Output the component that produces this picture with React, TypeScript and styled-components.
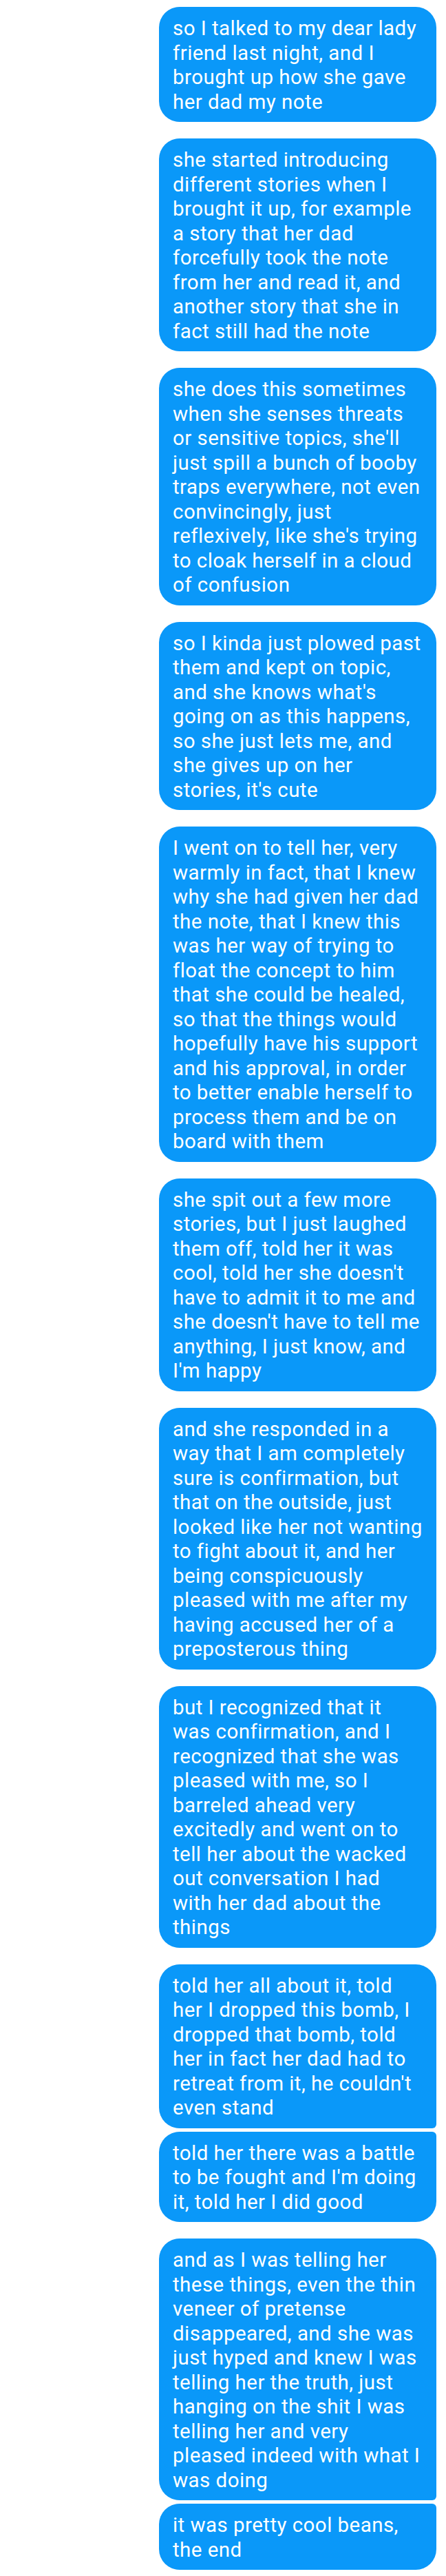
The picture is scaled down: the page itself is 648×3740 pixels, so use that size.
import React from "react";
import styled, { createGlobalStyle } from "styled-components";

const GlobalStyle = createGlobalStyle`
  html, body {
    margin: 0;
    padding: 0;
    background: #ffffff;
  }
  body {
    font-family: Roboto, "Noto Sans", "Liberation Sans", sans-serif;
  }
`;

const Thread = styled.div`
  display: flex;
  flex-direction: column;
  align-items: flex-end;
  gap: 24px;
  padding: 10px 14px 10px 0;
  width: 648px;
  box-sizing: border-box;
`;

const Group = styled.div`
  display: flex;
  flex-direction: column;
  gap: 5px;
`;

type Pos = "single" | "first" | "middle" | "last";

const Bubble = styled.div<{ $pos: Pos }>`
  width: 403px;
  box-sizing: border-box;
  background: #0a98f9;
  color: #ffffff;
  font-size: 29.5px;
  letter-spacing: 0.45px;
  line-height: 35.5px;
  padding: 14px 8px 11px 20px;
  white-space: nowrap;
  overflow: hidden;
  border-radius: ${({ $pos }) =>
    $pos === "first"
      ? "30px 30px 6px 30px"
      : $pos === "last"
      ? "30px 6px 30px 30px"
      : $pos === "middle"
      ? "30px 6px 6px 30px"
      : "30px"};
`;

const groups: string[][][] = [
  [["so I talked to my dear lady", "friend last night, and I", "brought up how she gave", "her dad my note"]],
  [[
    "she started introducing",
    "different stories when I",
    "brought it up, for example",
    "a story that her dad",
    "forcefully took the note",
    "from her and read it, and",
    "another story that she in",
    "fact still had the note",
  ]],
  [[
    "she does this sometimes",
    "when she senses threats",
    "or sensitive topics, she'll",
    "just spill a bunch of booby",
    "traps everywhere, not even",
    "convincingly, just",
    "reflexively, like she's trying",
    "to cloak herself in a cloud",
    "of confusion",
  ]],
  [[
    "so I kinda just plowed past",
    "them and kept on topic,",
    "and she knows what's",
    "going on as this happens,",
    "so she just lets me, and",
    "she gives up on her",
    "stories, it's cute",
  ]],
  [[
    "I went on to tell her, very",
    "warmly in fact, that I knew",
    "why she had given her dad",
    "the note, that I knew this",
    "was her way of trying to",
    "float the concept to him",
    "that she could be healed,",
    "so that the things would",
    "hopefully have his support",
    "and his approval, in order",
    "to better enable herself to",
    "process them and be on",
    "board with them",
  ]],
  [[
    "she spit out a few more",
    "stories, but I just laughed",
    "them off, told her it was",
    "cool, told her she doesn't",
    "have to admit it to me and",
    "she doesn't have to tell me",
    "anything, I just know, and",
    "I'm happy",
  ]],
  [[
    "and she responded in a",
    "way that I am completely",
    "sure is confirmation, but",
    "that on the outside, just",
    "looked like her not wanting",
    "to fight about it, and her",
    "being conspicuously",
    "pleased with me after my",
    "having accused her of a",
    "preposterous thing",
  ]],
  [[
    "but I recognized that it",
    "was confirmation, and I",
    "recognized that she was",
    "pleased with me, so I",
    "barreled ahead very",
    "excitedly and went on to",
    "tell her about the wacked",
    "out conversation I had",
    "with her dad about the",
    "things",
  ]],
  [
    [
      "told her all about it, told",
      "her I dropped this bomb, I",
      "dropped that bomb, told",
      "her in fact her dad had to",
      "retreat from it, he couldn't",
      "even stand",
    ],
    ["told her there was a battle", "to be fought and I'm doing", "it, told her I did good"],
  ],
  [
    [
      "and as I was telling her",
      "these things, even the thin",
      "veneer of pretense",
      "disappeared, and she was",
      "just hyped and knew I was",
      "telling her the truth, just",
      "hanging on the shit I was",
      "telling her and very",
      "pleased indeed with what I",
      "was doing",
    ],
    ["it was pretty cool beans,", "the end"],
  ],
];

function posFor(i: number, n: number): Pos {
  if (n === 1) return "single";
  if (i === 0) return "first";
  if (i === n - 1) return "last";
  return "middle";
}

export default function App() {
  return (
    <>
      <GlobalStyle />
      <Thread>
        {groups.map((g, gi) => (
          <Group key={gi}>
            {g.map((lines, bi) => (
              <Bubble key={bi} $pos={posFor(bi, g.length)}>
                {lines.map((l, li) => (
                  <React.Fragment key={li}>
                    {l}
                    {li < lines.length - 1 && <br />}
                  </React.Fragment>
                ))}
              </Bubble>
            ))}
          </Group>
        ))}
      </Thread>
    </>
  );
}
